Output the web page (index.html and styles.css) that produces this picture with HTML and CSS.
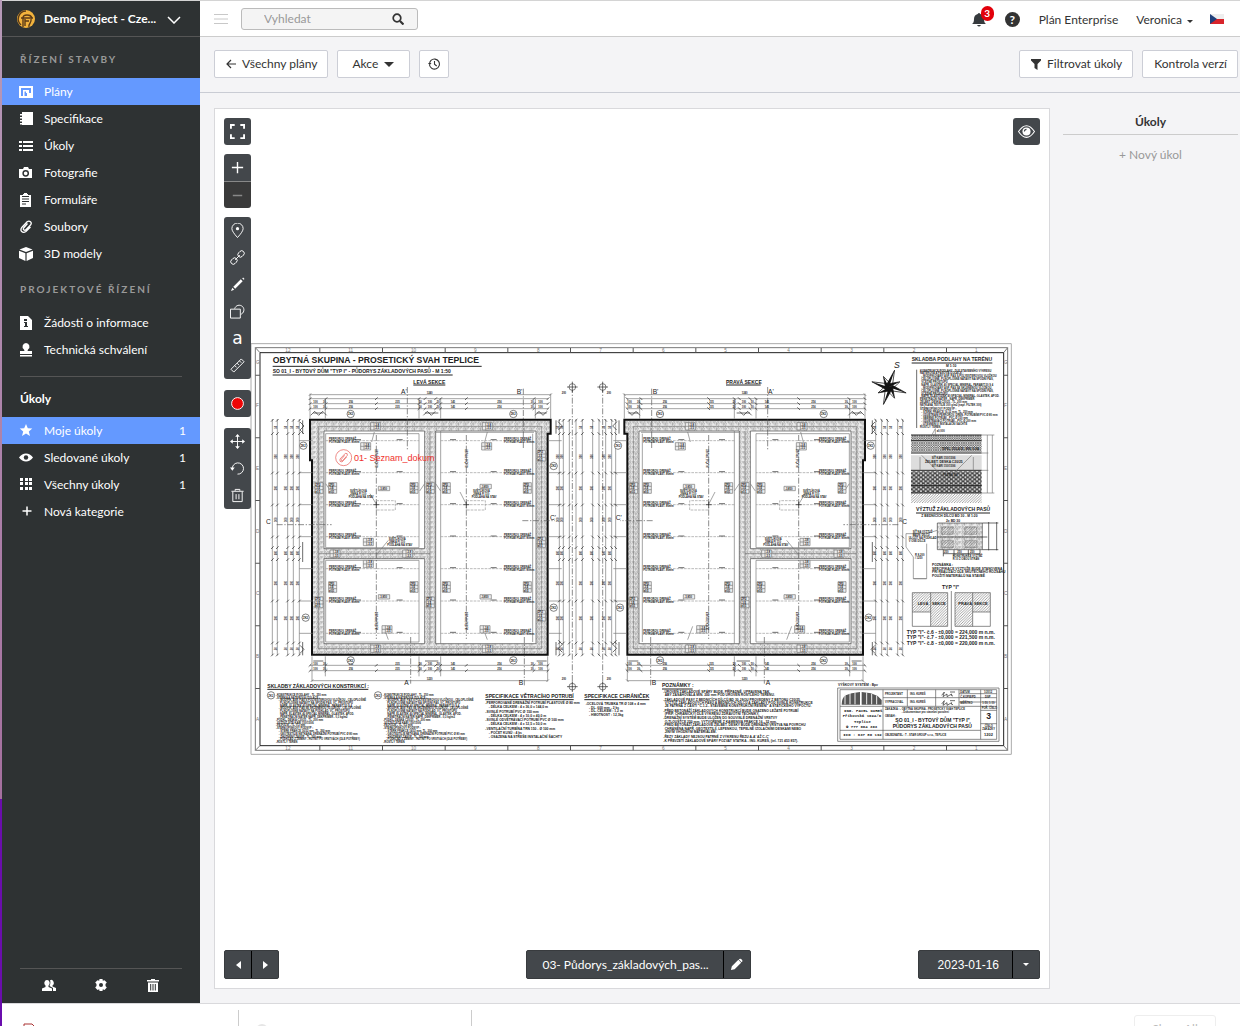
FILE: index.html
```html
<!DOCTYPE html>
<html lang="cs">
<head>
<meta charset="utf-8">
<title>Plány – Demo Project</title>
<link rel="stylesheet" href="styles.css">
</head>
<body>
<div class="app">
  <aside class="sidebar">
    <button class="project" type="button">
      <svg class="logo" viewBox="0 0 20 20"><circle cx="10" cy="10" r="9" fill="#f2b33d"/><path d="M10 2a8 8 0 0 0-5 14M7 18V9q0-3 4-3t5 3M5 9h12M9 10v7M13 18c-1-4 3-3 2-8M9 12h4" fill="none" stroke="#5b3a17" stroke-width="1.4"/></svg>
      <span class="project-name">Demo Project - Cze...</span>
      <svg class="chev" viewBox="0 0 14 8"><path d="M1 1l6 6 6-6" fill="none" stroke="#fff" stroke-width="1.5"/></svg>
    </button>
    <nav class="menu">
      <h2 class="group">Řízení stavby</h2>
      <a class="item active" href="#"><svg class="ic" viewBox="0 0 14 14"><path d="M0 1h14v12H0zM2 3v8h2V5h6v3h2V3zM5.500 6.500V11H8V8h-1V6.500z" fill="currentColor" fill-rule="evenodd"/></svg>Plány</a>
      <a class="item" href="#"><svg class="ic" viewBox="0 0 14 14"><path d="M3 0h11v13H3zM1 2h3v1.500H1zM1 5h3v1.500H1zM1 8h3v1.500H1zM1 11h3v1.500H1z" fill="currentColor"/></svg>Specifikace</a>
      <a class="item" href="#"><svg class="ic" viewBox="0 0 14 14"><path d="M0 2h3v2H0zM4 2h10v2H4zM0 6h3v2H0zM4 6h10v2H4zM0 10h3v2H0zM4 10h10v2H4z" fill="currentColor"/></svg>Úkoly</a>
      <a class="item" href="#"><svg class="ic" viewBox="0 0 14 14"><path d="M0 3h4l1-2h4l1 2h3v9H0z" fill="currentColor"/><circle cx="6.700" cy="7.300" r="2.600" fill="none" stroke="#2e3233" stroke-width="1.500"/></svg>Fotografie</a>
      <a class="item" href="#"><svg class="ic" viewBox="0 0 14 14"><path d="M1 2h3V1h1V0h3v1h1v1h3v12H1z" fill="currentColor"/><path d="M3 3.500h7M3 6h7M3 8.500h7M3 11h4" stroke="#2e3233"/></svg>Formuláře</a>
      <a class="item" href="#"><svg class="ic" viewBox="0 0 14 14"><path d="M8.500 3.500L4.600 8q-.8 1.400.3 2t2-.3L11.500 5q1.500-2 0-3.300t-3.400 0L3 7.200q-2 2.500-.3 4.300t4.200 0L11.500 7" fill="none" stroke="currentColor" stroke-width="1.300"/></svg>Soubory</a>
      <a class="item" href="#"><svg class="ic" viewBox="0 0 14 14"><path d="M7 0l6.500 2.500L7 5 .5 2.500zM0 3.700l6.400 2.500V14L0 11zM14 3.700L7.600 6.200V14L14 11z" fill="currentColor"/></svg>3D modely</a>
      <h2 class="group">Projektové řízení</h2>
      <a class="item" href="#"><svg class="ic" viewBox="0 0 14 14"><path d="M1 0h8l4 4v10H1z" fill="currentColor"/><path d="M5 3h3v2H5zM5 6h3v4h1v1H5v-1h1V7H5z" fill="#2e3233"/></svg>Žádosti o informace</a>
      <a class="item" href="#"><svg class="ic" viewBox="0 0 14 14"><path d="M7 0a3.600 3.600 0 0 1 2 6.500L8.500 8H13v3H1V8h4.500L5 6.500A3.600 3.600 0 0 1 7 0zM1 12h12v1.500H1z" fill="currentColor"/></svg>Technická schválení</a>
      <hr class="rule">
      <h2 class="title">Úkoly</h2>
      <a class="item active" href="#"><svg class="ic" viewBox="0 0 14 14"><path d="M7 0l1.800 4.200 4.500.3-3.500 2.900 1.200 4.600L7 9.500l-4 2.500 1.200-4.600L.7 4.500l4.500-.3z" fill="currentColor"/></svg>Moje úkoly<span class="count">1</span></a>
      <a class="item" href="#"><svg class="ic" viewBox="0 0 14 14"><path d="M0 6.500Q3 2.500 7 2.500t7 4q-3 4-7 4t-7-4z" fill="currentColor"/><circle cx="7" cy="6.500" r="2.200" fill="#2e3233"/></svg>Sledované úkoly<span class="count">1</span></a>
      <a class="item" href="#"><svg class="ic" viewBox="0 0 14 14"><path d="M1 0h3v3H1zM6 0h3v3H6zM10 0h3v3h-3zM1 4h3v3H1zM6 4h3v3H6zM10 4h3v3h-3zM1 9h3v3H1zM6 9h3v3H6zM10 9h3v3h-3z" fill="currentColor"/></svg>Všechny úkoly<span class="count">1</span></a>
      <a class="item" href="#"><svg class="ic" viewBox="0 0 14 14"><path d="M3.500 6h9M8 1.500v9" stroke="currentColor" stroke-width="1.500"/></svg>Nová kategorie</a>
    </nav>
    <div class="side-foot">
      <button class="plain" type="button" aria-label="Uživatelé"><svg class="ic" viewBox="0 0 14 14"><path d="M5 1a2.500 3 0 0 1 1.500 5.500V8L10 9.500V12H0V9.500L3.500 8V6.500A2.500 3 0 0 1 5 1zM8 1.300a2.500 3 0 0 1 2.500 5.200v1L14 9v3h-3V9L7.500 7q1.500-3 .5-5.700z" fill="currentColor"/></svg></button>
      <button class="plain" type="button" aria-label="Nastavení"><svg class="ic" viewBox="0 0 14 14"><path d="M5.500 0h3l.3 1.800 1.700-.6L12.800 3.500l-1.300 1.500v2L12.800 8.500 10.500 11l-1.700-.8L8.500 12h-3l-.3-1.800-1.700.8-2.300-2.500 1.300-1.500v-2L1.200 3.500l2.300-2.300 1.700.6z" fill="currentColor"/><circle cx="7" cy="6" r="2" fill="#2e3233"/></svg></button>
      <button class="plain" type="button" aria-label="Koš"><svg class="ic" viewBox="0 0 14 14"><path d="M1 1h4V0h4v1h4v1.500H1zM2 3.500h10V13H2z" fill="currentColor"/><path d="M4.700 5v6.500M7 5v6.500M9.300 5v6.500" stroke="#2e3233"/></svg></button>
    </div>
  </aside>

  <div class="main">
    <header class="topbar">
      <button class="plain burger" type="button" aria-label="Menu"><svg viewBox="0 0 14 10" width="14" height="10"><path d="M0 .5h14M0 5h14M0 9.500h14" stroke="#c8c8c8"/></svg></button>
      <label class="search"><input type="search" placeholder="Vyhledat" aria-label="Vyhledat"><svg viewBox="0 0 12 12" width="12" height="12"><circle cx="5" cy="5" r="3.800" fill="none" stroke="#333" stroke-width="1.700"/><path d="M8 8l3.500 3.500" stroke="#333" stroke-width="2.200"/></svg></label>
      <div class="account">
        <button class="plain bell" type="button" aria-label="Upozornění"><svg viewBox="0 0 14 15" width="14" height="15"><path d="M0 12q2-1 2-5 0-4 3.700-5Q7 0 8.300 2 12 3 12 7t2 5zM5 13h4q-2 3-4 0z" fill="#363a3d"/></svg><span class="badge">3</span></button>
        <button class="plain help" type="button">?</button>
        <a href="#" class="plan">Plán Enterprise</a>
        <button class="plain user" type="button">Veronica<svg viewBox="0 0 6 3" width="6" height="3"><path d="M0 0h6L3 3z" fill="#333"/></svg></button>
        <svg class="flag" viewBox="0 0 14 10" width="14" height="10"><path d="M0 0h14v5H0z" fill="#eee"/><path d="M0 5h14v5H0z" fill="#d8242b"/><path d="M0 0l7 5-7 5z" fill="#1f3f7b"/></svg>
      </div>
    </header>

    <div class="toolbar">
      <button class="btn" type="button"><svg viewBox="0 0 10 10" width="10" height="10"><path d="M10 5H1M5 1L1 5l4 4" fill="none" stroke="#333" stroke-width="1.200"/></svg>Všechny plány</button>
      <button class="btn menu-btn" type="button">Akce<svg viewBox="0 0 10 5" width="10" height="5"><path d="M0 0h10L5 5z" fill="#333"/></svg></button>
      <button class="btn icon" type="button" aria-label="Historie"><svg viewBox="0 0 12 12" width="12" height="12"><path d="M1.500 7A5 5 0 1 0 3 2.400 5 5 0 0 0 1.600 6M6.500 3v3.300L8.700 8" fill="none" stroke="#333" stroke-width="1.100"/><path d="M0 5h3.500L1.700 7.300z" fill="#333"/></svg></button>
      <span class="spacer"></span>
      <button class="btn" type="button"><svg viewBox="0 0 10 11" width="10" height="11"><path d="M0 0h10v1.500L6.500 5v6l-3-2V5L0 1.500z" fill="#333"/></svg>Filtrovat úkoly</button>
      <button class="btn" type="button">Kontrola verzí</button>
    </div>

    <div class="work">
      <main class="canvas">
        <svg class="sheet" viewBox="0 8 2286 1236" role="img" aria-label="Půdorys základových pasů">
          <defs>
            <pattern id="wall" width="22" height="15" patternUnits="userSpaceOnUse"><rect width="22" height="15" fill="#ececec"/><path d="M0 12L9 2M4 14L14 3M12 13l9-10" stroke="#888" stroke-width="2"/><path d="M2 3h3M15 5h3M8 12h3" stroke="#444" stroke-width="2"/></pattern>
            <pattern id="diag" width="8" height="8" patternUnits="userSpaceOnUse"><path d="M-2 10L10-2M-2 2l4-4M6 10l4-4" stroke="#777" stroke-width="2"/></pattern>
            <pattern id="cross" width="7" height="7" patternUnits="userSpaceOnUse"><rect width="7" height="7" fill="#ddd"/><path d="M0 0l7 7M7 0L0 7" stroke="#666" stroke-width="2"/></pattern>
            <pattern id="stone" width="14" height="12" patternUnits="userSpaceOnUse"><rect width="14" height="12" fill="#444"/><circle cx="4" cy="3" r="3" fill="#eee"/><circle cx="11" cy="9" r="3" fill="#eee"/></pattern>
            <g id="vdim"><path d="M0 236v709" class="l"/><path d="M-4 244l8-8M-4 284l8-8M-4 402l8-8M-4 498l8-8M-4 594l8-8M-4 626l8-8M-4 662l8-8M-4 786l8-8M-4 912l8-8M-4 948l8-8" class="k"/></g>
            <g id="hdim"><path d="M180 0h715" class="l"/><path d="M176 4l8-8M224 4l8-8M375 4l8-8M503 4l8-8M521 4l8-8M553 4l8-8M568 4l8-8M645 4l8-8M848 4l8-8M890 4l8-8" class="k"/></g>
            <g id="hnums" class="n b"><text x="190">100</text><text x="219">30</text><text x="296">256</text><text x="436">235</text><text x="506">50</text><text x="533">100</text><text x="560">50</text><text x="602">145</text><text x="742">256</text><text x="842">30</text><text x="865">100</text></g>
            <g id="vnums" class="n b"><text transform="translate(0 355) rotate(-90)">300</text><text transform="translate(0 450) rotate(-90)">300</text><text transform="translate(0 545) rotate(-90)">300</text><text transform="translate(0 645) rotate(-90)">100</text><text transform="translate(0 735) rotate(-90)">300</text><text transform="translate(0 840) rotate(-90)">300</text><text transform="translate(0 265) rotate(-90)">50</text><text transform="translate(0 930) rotate(-90)">50</text></g>
            <g id="pipe" class="n b"><text y="0">PERFOROV. DRENÁŽ</text><text y="9">POTRUBÍ PLAST. 80mm</text></g>
            <g id="pipes"><use href="#pipe" y="298"/><use href="#pipe" y="394"/><use href="#pipe" y="490"/><use href="#pipe" y="587"/><use href="#pipe" y="682"/><use href="#pipe" y="779"/><use href="#pipe" y="876"/></g>
            <g id="tag"><path d="M0 0h24v32H0zM0 11h24M0 21h24M12 0v32" class="tagbox"/><text x="1" y="9" class="n b">ZP.3</text><text x="1" y="20" class="n b">-3,5</text><text x="1" y="31" class="n b">±0,1</text></g>
            <g id="flat"><path d="M0 0h30v22H0zM0 11h30M10 0v22" class="tagbox"/><text x="12" y="9" class="n b">-3,8</text><text x="12" y="20" class="n b">-3,5</text></g>
            <g id="level"><path d="M0 0h34v13H0z" class="tagbox"/><text x="3" y="10" class="n b">-3,850</text></g>
            <g id="zk"><circle r="11" class="bub"/><text x="-8" y="4" class="n b">ZK2</text></g>
            <g id="jimka" class="n b"><text x="4">SVĚTLÍKOVÁ</text><text x="4" y="9">JÍMKA FI 110</text><text y="18">PODLAHA NA STAV</text></g>
            <g id="geo">
              <path d="M180 238h722v42h-9v663H186V360h-6z" fill="url(#wall)" stroke="#111" stroke-width="6"/>
              <path d="M222 272h302v353H222zM222 655h302v255H222zM557 272h301v638H557z" fill="#fff" stroke="#444" stroke-width="2"/>
              <path d="M227 280h280v342H227zM227 660h280v245H227zM572 272v638M848 280v625M557 276h295M205 258h670M205 258v667M205 925h670M875 258v667M540 272v638M207 640h333" fill="none" stroke="#777" stroke-width="2"/>
              <path d="M227 301h280M227 397h280M227 493h280M227 589h280M227 685h280M227 782h280M227 879h280M572 301h276M572 397h276M572 493h276M572 589h276M572 685h276M572 782h276M572 879h276" class="dash"/>
              <path d="M379 284v612M649 284v612" class="axis"/><path d="M472 140v190M482 890v140M820 145v180M823 890v145" class="axis"/>
              <path d="M379 481h57v28h-57zM649 481h57v28h-57z" class="dash"/>
              <path d="M370 493h18M379 484v18M640 493h18M649 484v18" class="k"/>
              <path d="M315 298h18M440 298h18M600 298h18M315 394h18M440 394h18M600 394h18M315 490h18M440 490h18M600 490h18M315 587h18M440 587h18M600 587h18M315 682h18M440 682h18M600 682h18M315 779h18M440 779h18M600 779h18M315 876h18M440 876h18M600 876h18M722 298h18M722 394h18M722 490h18M722 587h18M722 682h18M722 779h18M722 876h18" class="k"/>
              <path d="M148 301h40M148 397h40M148 493h40M148 589h40M148 685h40M148 782h40M148 879h40M895 301h40M895 397h40M895 493h40M895 589h40M895 685h40M895 782h40M895 879h40M180 160v75M226 175v60M902 160v75M856 175v60M507 175v60M572 175v60M186 948v75M226 948v60M893 948v75M507 948v60M572 948v60" class="l"/>
              <path d="M360 460l18 30M630 455l18 35M373 275l-8 30M712 275l-8 30M227 430l15 22M524 430l-15 22M557 430l15 22M400 858l15 40M697 858l15 40M415 600l-33 40" class="l"/>
              <use href="#hdim" y="175"/><use href="#hdim" y="190"/><use href="#hdim" y="205"/><use href="#hdim" y="975"/><use href="#hdim" y="991"/>
              <path d="M180 163h722M186 1021h707M176 167l8-8M898 167l8-8M182 1025l8-8M889 1025l8-8" class="l"/>
              <use href="#vdim" x="67"/><use href="#vdim" x="82"/><use href="#vdim" x="113"/><use href="#vdim" x="130"/><use href="#vdim" x="148"/><use href="#vdim" x="928"/><use href="#vdim" x="940"/><use href="#vdim" x="958"/><use href="#vdim" x="978"/><use href="#vdim" x="997"/>
              <path d="M182 225l12-12 12 12 12-12 12 12M520 225l12-12 12 12 12-12M855 225l12-12 12 12 12-12M150 245l12 12-12 12 12 12M150 915l12 12-12 12M925 245l12 12-12 12M925 900l12 12-12 12 12 12M190 218h30M525 218h40M860 218h30M190 962h30M525 962h40M860 962h30M158 240v40M158 905v40M918 240v40M918 905v40M158 605v60" class="k"/>
              <path d="M967 140v900" class="axis"/><circle cx="967" cy="140" r="10" class="bub"/><path d="M951 140h32M967 124v32" class="k"/><circle cx="967" cy="1039" r="10" class="bub"/><path d="M951 1039h32M967 1023v32" class="k"/>
              <path d="M80 553h165M817 541h98" class="axis"/>
            </g>
            <g id="notes-a" class="n b">
              <text y="0">-KONSTRUKCE PODLAHY - TL. 250 mm</text><text y="9">-STĚRKA A NÁTĚROVÁ IZOLACE :</text><text x="8" y="17">- MODIFIK. ASF. PÁS S POLYESTEROVOU VLOŽKOU - CELOPLOŠNĚ</text><text x="12" y="25">PLNOPLOŠNĚ NATAVIT NA SPODNÍ PÁS, VČ. PROSTUPŮ</text><text x="12" y="33">NAPŘ. GLASTEK 40 SPECIAL MINERAL, PARABIT 50 S 4</text><text x="8" y="41">- MODIFIK. ASF. PÁS SE SKLENĚNOU VLOŽKOU - CELOPLOŠNĚ</text><text x="12" y="49">PLNOPLOŠNĚ NATAVIT NA PODKLAD, VČ. PROSTUPŮ</text><text x="12" y="57">NAPŘ. ELASTEK 40 SPECIAL MINERAL, GLASTEK, APOD.</text><text x="8" y="66">- PENETRAČNÍ NÁTĚR NAPŘ. DEKPRIMER - 0,3 kg/m2</text><text y="75">-PODKL. DESKA C20/25 - TL. 200 mm</text><text y="84">-VÝZTUŽ SÍTĚ KARI 150/150/6</text><text y="92">-PE FÓLIE - TL. 0,2 mm</text><text y="100">-ŠTĚRKOPÍSKOVÝ PODSYP :</text><text x="8" y="108">- ŠTĚRK FRAKCE 16/32 mm, TL. 200 mm</text><text x="8" y="117">- GEOTEXTILIE NETKANÁ, DRENÁŽNÍ POTRUBÍ PVC Ø 80 mm</text><text x="8" y="126">- ZHUTNĚNÝ ZÁSYP - TL. 300 mm</text><text x="8" y="134">- PODKLAD Z ZEMINY - HUTNIT PO VRSTVÁCH (DLE POTŘEBY)</text><text y="143">-ROSTLÝ TERÉN</text>
            </g>
          </defs>
          <path d="M0 8h2286v1236H0z" fill="#fff"/>
          <g fill="none" stroke="#777" stroke-width="3"><path d="M3 10h2281v1232H3z" stroke="#aaa"/><path d="M16 22h2257v1208H16zM16 22l14 15M2273 22l-12 15M16 1230l14-14M2273 1230l-12-14"/><path d="M30 37h2231v1179H30z" stroke="#222"/>
          <path d="M208 30h1960M208 1223h1960" stroke="#555" stroke-width="14" stroke-dasharray="3 185"/><path d="M23 103v960M2267 103v960" stroke="#555" stroke-width="14" stroke-dasharray="3 185"/></g>
          <g id="cols" class="g"><text x="106" y="35">12</text><text x="295" y="35">11</text><text x="483" y="35">10</text><text x="672" y="35">9</text><text x="861" y="35">8</text><text x="1048" y="35">7</text><text x="1236" y="35">6</text><text x="1423" y="35">5</text><text x="1612" y="35">4</text><text x="1801" y="35">3</text><text x="1988" y="35">2</text><text x="2175" y="35">1</text></g>
          <use href="#cols" y="1193"/>
          <g id="rows" class="g"><text x="18" y="71">G</text><text x="18" y="200">F</text><text x="18" y="389">E</text><text x="18" y="577">D</text><text x="18" y="765">C</text><text x="18" y="953">B</text><text x="18" y="1141">A</text></g>
          <use href="#rows" x="2244"/>

          <use href="#geo"/>
          <use href="#geo" transform="translate(2025 0) scale(-1 1)"/>

          <use href="#pipes" x="237"/><use href="#pipes" x="762"/><use href="#pipes" x="1180"/><use href="#pipes" x="1707"/>
          <use href="#hnums" y="188"/><use href="#hnums" y="203"/><use href="#hnums" y="989"/><use href="#hnums" y="973"/>
          <use href="#hnums" x="942" y="188"/><use href="#hnums" x="942" y="203"/><use href="#hnums" x="942" y="989"/><use href="#hnums" x="942" y="973"/>
          <g class="n b"><text x="530" y="161">1240</text><text x="1475" y="161">1240</text><text x="530" y="1019">1220</text><text x="1475" y="1019">1220</text><text x="935" y="161">200</text><text x="1070" y="161">200</text><text x="935" y="1019">200</text><text x="1070" y="1019">200</text></g>
          <use href="#vnums" x="80"/><use href="#vnums" x="111"/><use href="#vnums" x="128"/><use href="#vnums" x="146"/><use href="#vnums" x="926"/><use href="#vnums" x="940"/><use href="#vnums" x="995"/><use href="#vnums" x="1030"/><use href="#vnums" x="1066"/><use href="#vnums" x="1084"/><use href="#vnums" x="1879"/><use href="#vnums" x="1908"/><use href="#vnums" x="1925"/><use href="#vnums" x="1956"/>
          <g id="tags"><use href="#tag" x="236" y="427"/><use href="#tag" x="480" y="427"/><use href="#tag" x="577" y="427"/><use href="#tag" x="820" y="427"/><use href="#tag" x="195" y="427"/><use href="#tag" x="529" y="427"/><use href="#tag" x="236" y="724"/><use href="#tag" x="480" y="724"/><use href="#tag" x="577" y="724"/><use href="#tag" x="820" y="724"/><use href="#tag" x="195" y="770"/><use href="#tag" x="529" y="770"/>
          <use href="#flat" x="362" y="247"/><use href="#flat" x="697" y="247"/><use href="#flat" x="362" y="914"/><use href="#flat" x="697" y="914"/><use href="#flat" x="332" y="307"/><use href="#flat" x="695" y="307"/><use href="#flat" x="396" y="856"/><use href="#flat" x="690" y="856"/></g>
          <use href="#tags" x="944"/>
          <g><use href="#tag" x="862" y="330"/><use href="#tag" x="862" y="590"/><use href="#tag" x="862" y="810"/><use href="#flat" x="240" y="629"/><use href="#flat" x="458" y="629"/><use href="#flat" x="340" y="594"/><use href="#flat" x="340" y="660"/><use href="#flat" x="1535" y="629"/><use href="#flat" x="1752" y="629"/><use href="#flat" x="1650" y="594"/><use href="#flat" x="1650" y="660"/></g>
          <use href="#level" x="385" y="438"/><use href="#level" x="690" y="432"/><use href="#level" x="1300" y="432"/><use href="#level" x="1602" y="438"/><use href="#level" x="385" y="763"/><use href="#level" x="690" y="763"/><use href="#level" x="1300" y="763"/><use href="#level" x="1602" y="763"/>
          <use href="#jimka" x="296" y="456"/><use href="#jimka" x="665" y="456"/><use href="#jimka" x="1286" y="456"/><use href="#jimka" x="1655" y="456"/>
          <use href="#jimka" x="412" y="598"/><use href="#jimka" x="1540" y="598"/>
          <use href="#zk" x="302" y="221"/><use href="#zk" x="790" y="221"/><use href="#zk" x="1230" y="221"/><use href="#zk" x="1721" y="221"/><use href="#zk" x="160" y="316"/><use href="#zk" x="1104" y="316"/><use href="#zk" x="1862" y="316"/><use href="#zk" x="911" y="377"/><use href="#zk" x="167" y="832"/><use href="#zk" x="911" y="802"/><use href="#zk" x="1110" y="802"/><use href="#zk" x="1856" y="832"/><use href="#zk" x="302" y="960"/><use href="#zk" x="790" y="960"/><use href="#zk" x="1230" y="960"/><use href="#zk" x="1721" y="960"/>
          <g class="n b"><text transform="translate(383 382) rotate(-90)">ULIČNÍ VPUST</text><text transform="translate(653 382) rotate(-90)">ULIČNÍ VPUST</text><text transform="translate(1376 382) rotate(-90)">ULIČNÍ VPUST</text><text transform="translate(1646 382) rotate(-90)">ULIČNÍ VPUST</text><text transform="translate(383 870) rotate(-90)">ULIČNÍ VPUST</text><text transform="translate(653 870) rotate(-90)">ULIČNÍ VPUST</text><text transform="translate(1376 870) rotate(-90)">ULIČNÍ VPUST</text><text transform="translate(1646 870) rotate(-90)">ULIČNÍ VPUST</text></g>
          <g class="mark"><text x="453" y="160">A'</text><text x="800" y="160">B'</text><text x="1208" y="160">B'</text><text x="1554" y="160">A'</text><text x="48" y="552">C</text><text x="900" y="540">C'</text><text x="1097" y="540">C'</text><text x="1957" y="550">C</text><text x="463" y="1035">A</text><text x="806" y="1035">B</text><text x="1205" y="1035">B</text><text x="1547" y="1035">A</text></g>

          <g class="h"><text x="68" y="68" class="s26">OBYTNÁ SKUPINA - PROSETICKÝ SVAH TEPLICE</text><text x="68" y="98" class="s15">SO 01_I - BYTOVÝ DŮM "TYP I" - PŮDORYS ZÁKLADOVÝCH PASŮ - M 1:50</text><text x="490" y="130" class="s15">LEVÁ SEKCE</text><text x="1428" y="130" class="s15">PRAVÁ SEKCE</text>
          <text x="52" y="1042" class="s15">SKLADBY ZÁKLADOVÝCH KONSTRUKCÍ :</text><text x="706" y="1074" class="s15">SPECIFIKACE VĚTRACÍHO POTRUBÍ</text><text x="1003" y="1074" class="s15">SPECIFIKACE CHRÁNIČEK</text><text x="1236" y="1040" class="s15">POZNÁMKY :</text>
          <text x="1985" y="63" class="s15">SKLADBA PODLAHY NA TERÉNU</text><text x="2088" y="80" class="s10">M 1:10</text><text x="1998" y="513" class="s15">VÝZTUŽ ZÁKLADOVÝCH PASŮ</text><text x="2014" y="530" class="s10">Z BEDNÍCÍCH DÍLCŮ BD 30 - M 1:20</text><text x="2088" y="544" class="s10">2x BD 30</text><text x="2076" y="746" class="s15">TYP "I"</text>
          <text x="1970" y="880" class="s15">TYP "I"- č.6 - ±0,000 = 224,000 m n.m.</text><text x="1970" y="896" class="s15">TYP "I"- č.7 - ±0,000 = 221,500 m n.m.</text><text x="1970" y="913" class="s15">TYP "I"- č.8 - ±0,000 = 220,000 m n.m.</text></g>
          <path d="M68 78h627M68 104h540M490 134h96M1428 134h104M52 1047h303M706 1078h265M1003 1078h195M1236 1046h92M1985 68h242M1998 518h222" stroke="#222" stroke-width="3"/>

          <use href="#zk" x="63" y="1065"/><use href="#notes-a" x="78" y="1066"/>
          <use href="#zk" x="384" y="1065"/><use href="#notes-a" x="400" y="1066"/>
          <g class="n b s10"><text x="706" y="1091">-PERFOROVANÉ DRENÁŽNÍ POTRUBÍ PLASTOVÉ Ø 80 mm</text><text x="716" y="1102">- DÉLKA CELKEM : 4 x 36,0 = 144,0 m</text><text x="706" y="1117">-SVISLÉ POTRUBÍ PVC Ø 150 mm</text><text x="716" y="1129">- DÉLKA CELKEM : 4 x 10,0 = 40,0 m</text><text x="706" y="1143">-SVISLÉ ODVĚTRÁVACÍ POTRUBÍ PVC Ø 100 mm</text><text x="716" y="1154">- DÉLKA CELKEM : 4 x 12,5 = 50,0 m</text><text x="706" y="1170">-VENTILAČNÍ TURBÍNA TRN 150 - Ø 100 mm</text><text x="716" y="1181">- POČET KUSŮ : 4 ks</text><text x="716" y="1193">- OSAZENA NA STŘEŠE INSTALAČNÍ ŠACHTY</text>
          <text x="1007" y="1094">-OCELOVÁ TRUBKA TR Ø 108 x 4 mm</text><text x="1017" y="1105">- DL. 600 mm - 2 ks</text><text x="1017" y="1116">- DL. CELKEM : 1,2 m</text><text x="1017" y="1127">- HMOTNOST : 12,3kg</text></g>
          <g class="n b s10"><text x="1240" y="1058">-ÚROVEŇ ZÁKLADOVÉ SPÁRY BUDE, PŘÍPADNĚ, UPRAVENA TAK,</text><text x="1244" y="1068">ABY ZASAHOVALA MIN. 200 mm POD ÚROVEŇ ROSTLÉHO TERÉNU.</text><text x="1240" y="1081">-ZÁKLADOVÉ PASY Z BEDNICÍCH DÍLCŮ BD 30 JSOU PROVEDENY Z BETONU C20/25,</text><text x="1244" y="1091">VÝZTUŽ ZÁKLADOVÝCH PASŮ A BEDNÍCÍCH DÍLCŮ A ZÁKLADY POD SVISLÉ KONSTRUKCE</text><text x="1244" y="1101">JE PATRNÁ Z ČÁSTI "C.1.2.- STAVEBNĚ KONSTRUKČNÍ ŘEŠENÍ" A STATICKÉHO VÝPOČTU.</text><text x="1240" y="1114">-PŘED BETONÁŽÍ ZÁKLADOVÝCH KONSTRUKCÍ BUDE OSAZENO LEŽATÉ POTRUBÍ</text><text x="1244" y="1124">(PŘÍP. CHRÁNIČKY) DLE VÝKRESU ZDRAVOTNÍ TECHNIKY.</text><text x="1240" y="1137">-DRENÁŽNÍ SYSTÉM BUDE ULOŽEN DO SOUVISLÉ DRENÁŽNÍ VRSTVY</text><text x="1244" y="1147">O TLOUŠŤCE 250 mm, VYTVOŘENÉ Z KAMENIVA FRAKCE 16 - 32 mm.</text><text x="1240" y="1158">-PŘED BETONÁŽÍ ZÁKLADOVÉ ŽELBET. DESKY BUDE DRENÁŽNÍ VRSTVA NA POVRCHU</text><text x="1244" y="1168">CHRÁNĚNA NAPŘ. GEOTEXTILIÍ, LEPENKOU, TEPELNĚ IZOLAČNÍMI DESKAMI NEBO</text><text x="1244" y="1178">JINÝM VHODNÝM MATERIÁLEM.</text><text x="1240" y="1193">-ŘEZY ZÁKLADY NEJSOU PATRNÉ Z VÝKRESU ŘEZU A-A' AŽ C-C'</text><text x="1240" y="1206">-K PŘEVZETÍ ZÁKLADOVÉ SPÁRY POZVAT STATIKA - ING. KUREŠ, (tel. 721 453 857).</text></g>

          <path d="M2000 88v175" class="k"/>
          <g class="n b"><text x="2010" y="94">KONSTRUKCE PODLAHY - DLE STAVEBNÍHO VÝKRESU</text><text x="2010" y="102">NÁTĚROVÁ A PÁSOVÁ IZOLACE :</text><text x="2014" y="110">- MODIFIKOVANÝ ASF. PÁS S POLYESTEROVOU VLOŽKOU</text><text x="2014" y="119">CELOPLOŠNĚ, PLNOPLOŠNĚ NATAVIT NA SPODNÍ PÁS,</text><text x="2014" y="128">VČETNĚ PROSTUPŮ</text><text x="2014" y="137">NAPŘ. GLASTEK 40 SPECIAL MINERAL, PARABIT 50 S 4</text><text x="2014" y="145">- MODIFIKOVANÝ ASF. PÁS SE SKLENĚNOU VLOŽKOU,</text><text x="2014" y="154">CELOPLOŠNĚ, PLNOPLOŠNĚ NATAVIT NA SPODNÍ PÁS,</text><text x="2014" y="163">VČETNĚ PROSTUPŮ</text><text x="2014" y="171">NAPŘ. ELASTODEK 40 SPECIAL MINERAL, GLASTEK, APOD.</text><text x="2010" y="180">PENETRAČNÍ NÁTĚR - NAPŘ. DEKPRIMER</text><text x="2010" y="189">ŽELBET. DESKA C20/25 - TL. 200 mm</text><text x="2010" y="198">NETKANÁ TEXTILIE 300 g/m2 (např. FILTEK 300)</text><text x="2010" y="208">ŠTĚRKOPÍSKOVÝ PODSYP :</text><text x="2014" y="217">- ŠTĚRK FRAKCE 16-32 mm, TL. 250 mm</text><text x="2014" y="226">- ODVĚTRÁNÍ PERFOROV. DREN. POTRUBÍMI PVC Ø 80 mm</text><text x="2014" y="235">- SBĚRNÉ POTRUBÍ - PVC Ø 150 mm</text><text x="2014" y="244">- ODVĚTRÁVACÍ POTRUBÍ - PVC Ø 100 mm</text><text x="2014" y="253">- UTĚSNĚNÍ V INSTALAČNÍ ŠACHTĚ</text><text x="2010" y="262">ROSTLÝ TERÉN</text></g>
          <path d="M1983 284h212v14h-212z" fill="url(#cross)"/><path d="M1983 300h212v36h-212z" fill="url(#cross)"/><path d="M1983 345h212v44h-212z" fill="#ddd"/><path d="M1983 393h212v65h-212z" fill="url(#stone)"/><path d="M1983 460h212v28h-212z" fill="url(#diag)"/>
          <path d="M1983 284h212M1983 300h212M1983 338h212M1983 390h212M1983 436h212M1983 458h212" stroke="#222" stroke-width="3"/><path d="M2212 284v174M2227 284v174M2195 284h38M2195 338h20M2195 390h20M2195 458h38M2010 350v40M2170 350v40M2015 345l60 60M2165 345l-60 60M2056 265v18h-10z" class="l"/>
          <g class="h s10"><text x="2025" y="368">ŽELBET. DESKA C20/25</text></g>
          <g class="n b"><text x="2045" y="355">SÍŤ KARI 150/150/6</text><text x="2045" y="381">SÍŤ KARI 150/150/6</text><text x="2075" y="330">TEPEL. IZOLACE - MIN. VLNA</text><text x="2080" y="408">FILTEK 300</text><text x="2060" y="276">±0,000</text></g>

          <path d="M2062 548h135v80h-135z" fill="url(#wall)" stroke="#444" stroke-width="2"/><path d="M2075 560h35v22h-35zM2145 560h35v22h-35zM2075 600h35v22h-35zM2145 600h35v22h-35z" fill="url(#diag)" stroke="#444"/><path d="M2062 590h150M2197 548h48M2197 628h48M2216 545v85M2240 545v85M2080 640h110M2080 628v20M2112 628v20M2155 628v20M2190 628v20" class="k"/>
          <path d="M1968 580h60l34-10M1968 580v40l22 30v65h40V610M1990 715h40" class="l"/><g class="n b"><text x="1988" y="577">SÍŤ NA VÝZTUŽ</text><text x="1988" y="586">BEDN. DÍLCŮ</text><text x="1976" y="595">ULOŽIT NA PODKLAD</text><text x="1976" y="604">V OSE DÍLCE</text><text x="1995" y="648">R 8-200</text><text x="1995" y="657">/ 1250</text><text x="2082" y="638">250</text><text x="2122" y="638">250</text><text x="2160" y="638">250</text><text x="2108" y="650">KONSTRUKCE VÝZTUŽ</text><text x="2108" y="659">R 10 Z OBOU STRAN</text></g>
          <g class="n b s10"><text x="2046" y="677">POZNÁMKA :</text><text x="2046" y="689">SPECIFIKACE VÝZTUŽE BUDE STANOVENA</text><text x="2046" y="699">PŘI REALIZACI DLE SKUTEČNÉHO ROZSAHU</text><text x="2046" y="709">POUŽITÍ MATERIÁLŮ NA STAVBĚ</text></g>
          <path d="M1987 757h106v101h-51v-43h-55zM2115 757h106v58h-53v43h-53z" fill="url(#diag)"/><path d="M1987 757h106v101h-106zM2115 757h106v101h-106zM1987 815h55M2168 815h53M2042 757v101M2168 757v101M2104 752v118" class="box"/>
          <g class="n b s12"><text x="2003" y="793">LEVÁ</text><text x="2046" y="793">SEKCE</text><text x="2125" y="793">PRAVÁ</text><text x="2172" y="793">SEKCE</text></g>

          <g transform="translate(1917 141) rotate(18)"><path d="M0-54L8-9 54 0 9 8 0 54-9 8-54 0-8-9zM26-26L12 0l14 26L0 12l-26 14L-12 0l-14-26L0-12z" fill="#fff" stroke="#111" stroke-width="2"/><path d="M0-54V0L-9-9zM54 0H0l9-9zM0 54V0l9 9zM-54 0H0l-9 9zM26-26L0 0v-12zM26 26L0 0h12zM-26 26L0 0v12zM-26-26L0 0h-12z" fill="#111"/></g><text x="1932" y="84" class="north">S</text>

          <text x="1764" y="1038" class="n b s10">VÝŠKOVÝ SYSTÉM : Bpv</text>
          <path d="M1763 1043h484v160h-484z" class="box"/><path d="M1770 1048h470v149h-470zM1899 1048v149M1972 1048v50M2057 1048v50M2127 1048v50M2192 1048v149M1899 1072h341M1770 1098h470M1770 1170h129M1899 1170h293M2127 1060h113M2127 1085h113M2192 1110h48M2192 1150h48" class="box"/>
          <path d="M1775 1093q0-20 12-28l18-6 25-4v38zM1835 1093v-38l28 4 20 8 12 12v14z" fill="#555"/><path d="M1785 1062v30M1800 1058v34M1815 1056v36M1850 1056v36M1865 1060v32M1880 1066v26" stroke="#eee" stroke-width="3"/>
          <g class="mono"><text x="1782" y="1114">ING. PAVEL KUREŠ</text><text x="1778" y="1131">Příkovská 1024/6</text><text x="1812" y="1147">Teplice</text><text x="1788" y="1163">☎ 777 604 303</text><text x="1780" y="1188">IČO : 637 80 192</text></g>
          <g class="n b"><text x="1905" y="1064">PROJEKTANT</text><text x="1980" y="1064">ING. KUREŠ</text><text x="1905" y="1089">VYPRACOVAL</text><text x="1980" y="1089">ING. KUREŠ</text><text x="2131" y="1058">DATUM</text><text x="2131" y="1072">Č.KOPIE/PD</text><text x="2131" y="1090">MĚŘÍTKO</text><text x="2202" y="1058">1/2012</text><text x="2205" y="1072">DSP</text><text x="2197" y="1090">1:50, 1:10</text><text x="1905" y="1110">ZAKÁZKA : - OBYTNÁ SKUPINA - PROSETICKÝ SVAH TEPLICE</text><text x="1955" y="1118">- Dokumentace pro stavební povolení</text><text x="1905" y="1129">OBSAH :</text><text x="1905" y="1186">OBJEDNATEL : T - STAR GROUP s.r.o., TEPLICE</text><text x="2195" y="1106">POŘ. ČÍSLO</text><text x="2204" y="1160">ČÍSLO</text><text x="2197" y="1168">ZAKÁZKY</text></g>
          <g class="h"><text x="1936" y="1146" class="s15">SO 01_I - BYTOVÝ DŮM "TYP I"</text><text x="1928" y="1164" class="s15">PŮDORYS ZÁKLADOVÝCH PASŮ</text><text x="2209" y="1137" class="s26">3</text><text x="2202" y="1186" class="s12">1202</text></g>
          <path d="M2075 1065l8-10-4 14 12-8v8l14-8q-4 6 4 6M2100 1055h15M2075 1091l8-10-4 14 12-8v8l14-8q-4 6 4 6M2100 1081h15" class="k"/>

          <g fill="none" stroke="#e5534f" stroke-width="2"><circle cx="281" cy="352" r="24"/><path d="M284 345l-10 12q-1 5 4 4l14-16q2-7-6-6l-16 17q-3 9 6 9l14-15" stroke-width="2"/></g>
          <text x="312" y="362" class="link-text">01- Seznam_dokum</text>
        </svg>

        <div class="tools">
          <div class="set"><button class="tool" type="button" aria-label="Celá obrazovka"><svg viewBox="0 0 16 16"><path d="M1 5V1h4M11 1h4v4M15 11v4h-4M5 15H1v-4" fill="none" stroke="#fff" stroke-width="2"/></svg></button></div>
          <div class="set"><button class="tool" type="button" aria-label="Přiblížit"><svg viewBox="0 0 16 16"><path d="M2 8h12M8 2v12" stroke="#fff" stroke-width="1.500"/></svg></button><button class="tool off" type="button" aria-label="Oddálit"><svg viewBox="0 0 16 16"><path d="M3 8h10" stroke="#888" stroke-width="1.500"/></svg></button></div>
          <div class="set">
            <button class="tool" type="button" aria-label="Úkol"><svg viewBox="0 0 16 16"><path d="M8 15.500Q2 9 2 6a6 6 0 0 1 12 0q0 3-6 9.500z" class="o"/><circle cx="8" cy="6" r="1.700" fill="#fff"/></svg></button>
            <button class="tool" type="button" aria-label="Odkaz"><svg viewBox="0 0 16 16"><rect x="-3.700" y="-2.700" width="7.400" height="5.400" rx="2.700" transform="translate(4.200 11.800) rotate(-45)" class="o"/><rect x="-3.700" y="-2.700" width="7.400" height="5.400" rx="2.700" transform="translate(11.800 4.200) rotate(-45)" class="o"/><path d="M5.500 10.500l5-5" class="o"/></svg></button>
            <button class="tool" type="button" aria-label="Kreslit"><svg viewBox="0 0 16 16"><path d="M3.500 10.500L11.500 2.500l2 2L5.500 12.500zM2.500 11.500l2 2-3.500 1.500zM13 1.500l1-1 1.500 1.500-1 1z" fill="#fff"/></svg></button>
            <button class="tool" type="button" aria-label="Tvary"><svg viewBox="0 0 16 16"><path d="M.5 5.500H11V15H.5zM5 5a5 5 0 1 1 6.500 6" class="o"/></svg></button>
            <button class="tool letter" type="button">a</button>
            <button class="tool" type="button" aria-label="Měřit"><svg viewBox="0 0 16 16"><path d="M1 12L12 1l3 3L4 15zM5 8l2 2M7.500 5.500l2 2M10 3l2 2" class="o"/></svg></button>
          </div>
          <div class="set"><button class="tool" type="button" aria-label="Barva"><svg viewBox="0 0 16 16"><circle cx="8" cy="8" r="6.300" fill="#ee0505" stroke="#fff"/></svg></button></div>
          <div class="set">
            <button class="tool" type="button" aria-label="Posunout"><svg viewBox="0 0 16 16"><path d="M2 8h12M8 2v12" class="o"/><path d="M8 0l2.500 3h-5zM8 16l2.500-3h-5zM0 8l3-2.500v5zM16 8l-3-2.500v5z" fill="#fff"/></svg></button>
            <button class="tool" type="button" aria-label="Zpět"><svg viewBox="0 0 16 16"><path d="M2.500 9a6 6 0 1 1 5.500 5" class="o"/><path d="M0 7h5L2.500 10.500z" fill="#fff"/></svg></button>
            <button class="tool" type="button" aria-label="Smazat"><svg viewBox="0 0 16 16"><path d="M1.500 3.500h13M5.500 3V1.500h5V3M3 4v10.500h10V4M6.500 6.500v5.500M9.500 6.500v5.500" class="o"/></svg></button>
          </div>
        </div>
        <button class="tool eye" type="button" aria-label="Zobrazit"><svg viewBox="0 0 16 16"><path d="M.5 8Q4 2.500 8 2.500T15.500 8Q12 13.500 8 13.500T.5 8z" class="o"/><circle cx="8" cy="8" r="3.800" fill="#fff"/><path d="M6 8a2 2 0 0 1 2-2" fill="none" stroke="#43474b"/></svg></button>

        <div class="dock">
          <div class="seg"><button class="cell" type="button" aria-label="Předchozí"><svg viewBox="0 0 5 8" width="5" height="8"><path d="M5 0v8L0 4z" fill="#fff"/></svg></button><button class="cell" type="button" aria-label="Další"><svg viewBox="0 0 5 8" width="5" height="8"><path d="M0 0v8l5-4z" fill="#fff"/></svg></button></div>
          <div class="seg center"><button class="cell name" type="button">03- Půdorys_základových_pas...</button><button class="cell" type="button" aria-label="Přejmenovat"><svg viewBox="0 0 14 14" width="13" height="13"><path d="M1 13l1-4 7-7 3 3-7 7zM10 1.200q1-1 2 0l1 1q1 1 0 1.800l-.5.500-3-3z" fill="#fff"/></svg></button></div>
          <div class="seg end"><button class="cell date" type="button">2023-01-16</button><button class="cell" type="button" aria-label="Verze"><svg viewBox="0 0 6 3" width="6" height="3"><path d="M0 0h6L3 3z" fill="#fff"/></svg></button></div>
        </div>
      </main>

      <section class="tasks">
        <h2>Úkoly</h2>
        <button class="plain add" type="button">+ Nový úkol</button>
      </section>
    </div>
  </div>
</div>
<footer class="downloads">
  <div class="file"><svg viewBox="0 0 12 14" width="12" height="14"><path d="M1 1h8l2 2v10H1z" fill="#fff" stroke="#a33"/></svg></div>
  <div class="file"><svg viewBox="0 0 12 14" width="12" height="14"><circle cx="6" cy="7" r="6" fill="#e6e6e6"/></svg></div>
  <button class="show-all" type="button">Show All</button>
</footer>
</body>
</html>
```

FILE: styles.css
```css
* { box-sizing: border-box; }
html { background: linear-gradient(#b79ab8, #a5709f 799px, #6a0dad 799px); }
body { margin: 0 0 0 2px; height: 100vh; display: flex; flex-direction: column; overflow: hidden; border-top: 1px solid #d4d4d4; background: #fff; color: #333; font: 12px/16px Lato, "Noto Sans", sans-serif; }
button { font: inherit; color: inherit; cursor: pointer; }
a { color: inherit; text-decoration: none; }
h2 { margin: 0; font-size: 12px; }
.plain { border: 0; padding: 0; background: none; }

.app { flex: 1; min-height: 0; display: flex; }
.sidebar { width: 198px; flex: none; display: flex; flex-direction: column; background: #2e3233; color: #fff; }
.project { display: flex; align-items: center; height: 36px; padding: 0 19px 0 14px; border: 0; border-bottom: 1px solid #555; background: none; font-weight: 700; text-align: left; }
.logo { width: 20px; height: 20px; }
.project-name { flex: 1; margin-left: 8px; }
.chev { width: 14px; height: 8px; margin-top: 3px; }
.group { padding: 14px 18px 11px; color: #999; font-size: 10px; letter-spacing: 2px; text-transform: uppercase; }
.item + .group { padding-bottom: 12px; }
.item { display: flex; align-items: center; height: 27px; padding: 0 14px 0 17px; }
.item.active { background: #6499ff; }
.item .ic { margin-right: 11px; }
.ic { display: block; width: 14px; height: 14px; flex: none; }
.count { margin-left: auto; }
.rule { margin: 13px 18px 14px; border: 0; border-top: 1px solid #555; }
.title { padding: 0 18px 10px; }
.side-foot { display: flex; justify-content: space-around; margin: auto 18px 0; padding: 10px 3px; border-top: 1px solid #555; }

.main { flex: 1; min-width: 0; display: flex; flex-direction: column; background: #f4f4f6; }
.topbar { display: flex; align-items: center; height: 36px; padding: 0 16px 0 14px; border-bottom: 1px solid #ccc; background: #fff; }
.burger svg, .flag { display: block; }
.flag { margin-bottom: 2px; }
.search { display: flex; align-items: center; width: 177px; height: 22px; margin-left: 13px; padding: 0 13px 0 22px; border: 1px solid #bbb; border-radius: 3px; background: #f4f4f4; }
.search input { flex: 1; min-width: 0; padding: 0; border: 0; outline: 0; background: none; font: inherit; }
.search input::placeholder { color: #999; }
.account { display: flex; align-items: center; margin-left: auto; padding-top: 2px; }
.bell { position: relative; display: flex; margin-right: 19px; }
.badge { position: absolute; left: 9px; top: -6px; width: 13px; height: 15px; border-radius: 8px; background: #e2000b; color: #fff; font: 700 10px/15px Lato, sans-serif; text-align: center; }
.help { width: 15px; height: 15px; border-radius: 8px; background: #333; color: #fff; font-weight: 700; line-height: 15px; }
.plan { margin: 0 18px 0 19px; }
.user { display: flex; align-items: center; gap: 5px; margin-right: 17px; }
.user svg { margin-top: 3px; }

.toolbar { display: flex; align-items: center; gap: 9px; height: 56px; padding: 0 2px 1px 14px; border-bottom: 1px solid #c9ccd4; }
.btn { display: flex; align-items: center; gap: 6px; height: 28px; padding: 0 10px 0 11px; border: 1px solid #ccced6; border-radius: 2px; background: #fff; white-space: nowrap; }
.menu-btn { padding: 0 15px 0 14px; }
.btn.icon { padding: 0 8px; }
.spacer { flex: 1; }

.work { flex: 1; min-height: 0; display: flex; gap: 13px; padding: 15px 2px 14px 14px; }
.canvas { position: relative; flex: 1; min-width: 0; display: flex; align-items: center; padding: 0 37px 0 35px; border: 1px solid #d9d9dc; background: #fff; }
.sheet { display: block; width: 100%; font-family: "Liberation Sans", Arial, sans-serif; fill: #222; }
.tasks { width: 175px; flex: none; text-align: center; }
.tasks h2 { padding: 6px 0 4px; border-bottom: 1px solid #ccc; }
.add { margin-top: 12px; color: #999; }

.tools { position: absolute; left: 9px; top: 9px; display: grid; gap: 9px; }
.set { display: grid; border-radius: 3px; overflow: hidden; }
.set:nth-child(n+4) { margin-top: 2px; }
.tool { display: grid; place-items: center; width: 27px; height: 27px; padding: 0; border: 0; background: #43474b; color: #fff; }
.tool svg { width: 15px; height: 15px; }
.tool .o { fill: none; stroke: #fff; stroke-width: 1; }
.tool.off { border-top: 1px solid #888; background: #3a3a3a; }
.letter { font: 17px/17px "DejaVu Sans", sans-serif; }
.eye { position: absolute; right: 9px; top: 9px; border-radius: 3px; }
.eye svg { width: 17px; height: 17px; }
.dock { position: absolute; left: 9px; right: 9px; bottom: 9px; display: grid; grid-template-columns: 1fr auto 1fr; justify-items: start; }
.seg { display: flex; height: 29px; border: 1px solid #383b3e; border-radius: 2px; background: #43474b; color: #fff; }
.center { margin-left: 13px; }
.end { justify-self: end; }
.cell { display: grid; place-items: center; min-width: 26px; padding: 0; border: 0; background: none; }
.cell + .cell { border-left: 1px solid #000; min-width: 27px; }
.name { padding: 0 14px 0 15px; }
.date { padding: 0 13px 0 19px; font-family: "Liberation Sans", Arial, sans-serif; }

.downloads { display: flex; height: 23px; flex: none; padding: 6px 24px 0 0; border-top: 1px solid #d9d9dc; background: #fff; overflow: hidden; }
.file { width: 233px; padding: 13px 0 0 17px; border-right: 1px solid #ccc; }
.file:first-child { width: 237px; padding-left: 21px; }
.show-all { width: 82px; height: 28px; margin: 5px 0 0 auto; border: 1px solid #eee; border-radius: 3px; background: #fff; color: #bbb; }

.l { fill: none; stroke: #777; stroke-width: 2; }
.k { fill: none; stroke: #222; stroke-width: 2; }
.dash { fill: none; stroke: #999; stroke-width: 2; stroke-dasharray: 8 3; }
.axis { fill: none; stroke: #555; stroke-width: 2; stroke-dasharray: 18 5 4 5; }
.box { fill: none; stroke: #555; stroke-width: 2; }
.tagbox { fill: #eee; stroke: #777; stroke-width: 2; }
.bub { fill: #fff; stroke: #444; stroke-width: 2; }
.n { font-size: 8px; }
.g { font-size: 14px; fill: #777; }
.b, .h { font-weight: 700; }
.s10 { font-size: 10px; }
.s12 { font-size: 12px; }
.s15 { font-size: 15px; }
.s26 { font-size: 26px; }
.mark { font-size: 20px; }
.mono { font: 700 12px "Liberation Mono", monospace; }
.north { font: italic 26px "Liberation Sans", Arial, sans-serif; }
.link-text { font-size: 27px; fill: #f0302c; }
```
